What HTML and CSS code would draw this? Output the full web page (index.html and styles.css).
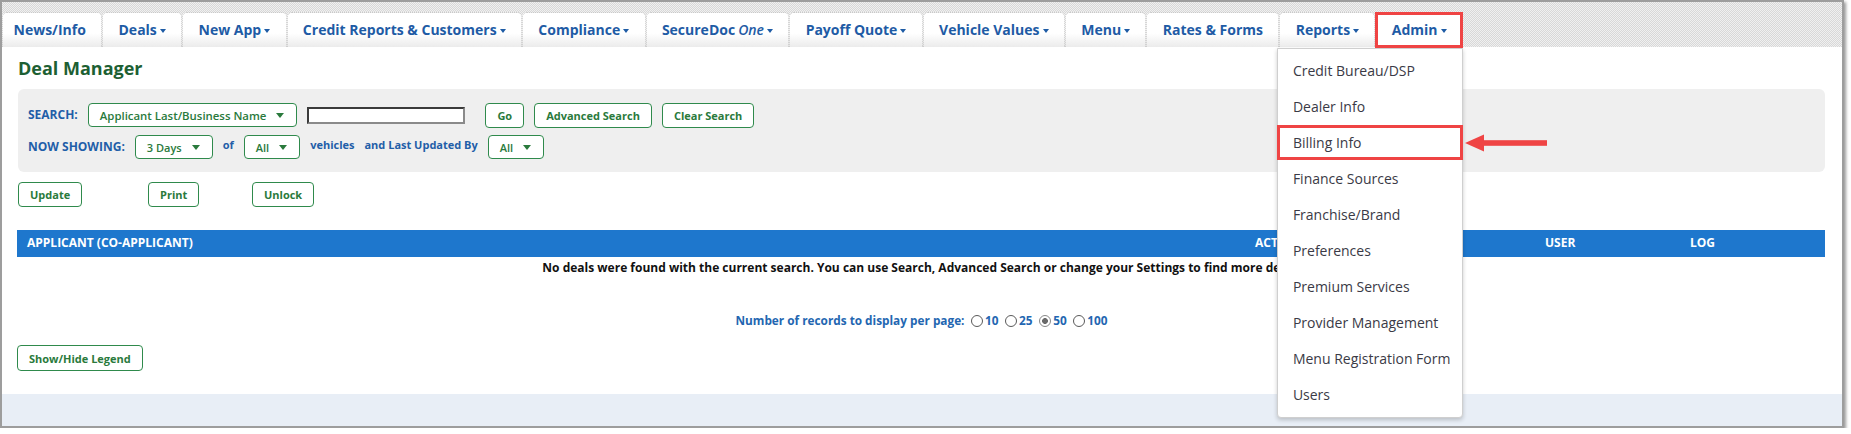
FILE: index.html
```html
<!DOCTYPE html>
<html lang="en">
<head>
    <meta charset="UTF-8">
    <meta name="viewport" content="width=device-width, initial-scale=1.0">
    <title>Deal Manager</title>
    <link rel="stylesheet" href="styles.css">
</head>
<body>
    <div class="screen">
        <nav class="top-nav">
            <ul class="tab-list">
                <li class="tab tab-first">News/Info</li>
                <li class="tab">Deals<span class="caret"></span></li>
                <li class="tab">New App<span class="caret"></span></li>
                <li class="tab">Credit Reports &amp; Customers<span class="caret"></span></li>
                <li class="tab">Compliance<span class="caret"></span></li>
                <li class="tab">SecureDoc<em>One</em><span class="caret"></span></li>
                <li class="tab">Payoff Quote<span class="caret"></span></li>
                <li class="tab">Vehicle Values<span class="caret"></span></li>
                <li class="tab">Menu<span class="caret"></span></li>
                <li class="tab">Rates &amp; Forms</li>
                <li class="tab">Reports<span class="caret"></span></li>
                <li class="tab tab-open">Admin<span class="caret"></span>
                    <ul class="dropdown-menu">
                        <li class="menu-item">Credit Bureau/DSP</li>
                        <li class="menu-item">Dealer Info</li>
                        <li class="menu-item is-marked">Billing Info
                            <svg class="callout-arrow" width="82" height="18" viewBox="0 0 82 18">
                                <polygon points="0,9 19,0.5 19,17.5" fill="#ef4444"/>
                                <rect x="17" y="6.2" width="65" height="5.6" fill="#ef4444"/>
                            </svg>
                        </li>
                        <li class="menu-item">Finance Sources</li>
                        <li class="menu-item">Franchise/Brand</li>
                        <li class="menu-item">Preferences</li>
                        <li class="menu-item">Premium Services</li>
                        <li class="menu-item">Provider Management</li>
                        <li class="menu-item">Menu Registration Form</li>
                        <li class="menu-item">Users</li>
                    </ul>
                </li>
            </ul>
        </nav>

        <main class="page-body">
            <h1 class="page-title">Deal Manager</h1>

            <div class="search-panel">
                <div class="search-row">
                    <span class="field-label">SEARCH:</span>
                    <span class="select-box select-wide">Applicant Last/Business Name<span class="select-arrow"></span></span>
                    <input class="search-input" type="text">
                    <button class="btn btn-go">Go</button>
                    <button class="btn">Advanced Search</button>
                    <button class="btn">Clear Search</button>
                </div>
                <div class="search-row">
                    <span class="field-label">NOW SHOWING:</span>
                    <span class="select-box">3 Days<span class="select-arrow"></span></span>
                    <span class="inline-label">of</span>
                    <span class="select-box">All<span class="select-arrow"></span></span>
                    <span class="inline-label">vehicles</span>
                    <span class="inline-label">and Last Updated By</span>
                    <span class="select-box">All<span class="select-arrow"></span></span>
                </div>
            </div>

            <div class="action-row">
                <div><button class="btn">Update</button></div>
                <div><button class="btn">Print</button></div>
                <div><button class="btn">Unlock</button></div>
            </div>

            <div class="deal-table">
                <div class="table-head">
                    <div class="head-cell">APPLICANT (CO-APPLICANT)</div>
                    <div class="head-cell">ACTIVITY</div>
                    <div class="head-cell">USER</div>
                    <div class="head-cell">LOG</div>
                </div>
                <p class="empty-row">No deals were found with the current search. You can use Search, Advanced Search or change your Settings to find more deals.</p>
            </div>

            <div class="page-size">
                Number of records to display per page:
                <label><input type="radio" name="size">10</label>
                <label><input type="radio" name="size">25</label>
                <label><input type="radio" name="size" checked>50</label>
                <label><input type="radio" name="size">100</label>
            </div>

            <button class="btn btn-legend">Show/Hide Legend</button>
        </main>

        <footer class="page-footer"></footer>
    </div>
</body>
</html>
```

FILE: styles.css
```css
body {
    margin: 0;
    background-color: #fff;
    font-family: 'Open Sans', sans-serif;
}
.screen {
    position: relative;
    width: 1840px;
    height: 424px;
    border: 2px solid #9d9d9d;
    box-shadow: 2px 2px 3px rgba(0, 0, 0, 0.4);
    display: flex;
    flex-direction: column;
    background-color: #fff;
}

/* top tabs */
.top-nav {
    height: 45px;
    flex-shrink: 0;
    box-sizing: border-box;
    padding-top: 10px;
    background: repeating-conic-gradient(#d8d8d8 0 25%, #f0f0f0 0 50%) 0 0 / 2px 2px;
    position: relative;
    z-index: 5;
}
.tab-list {
    list-style: none;
    margin: 0;
    padding: 0;
    display: flex;
    height: 35px;
}
.tab {
    position: relative;
    box-sizing: border-box;
    height: 35px;
    padding: 0 15.35px;
    display: flex;
    align-items: center;
    gap: 3px;
    border: 1px dotted #c9c9c9;
    border-bottom: none;
    border-radius: 5px 5px 0 0;
    background: linear-gradient(to bottom, #fff 0%, #fff 60%, #ebebeb 100%);
    color: #1e5ba5;
    font-weight: 700;
    font-size: 14px;
    line-height: 34px;
    white-space: nowrap;
}
.tab-first {
    padding-left: 10.5px;
}
.tab em {
    font-weight: 600;
}
.caret {
    display: inline-block;
    width: 0;
    height: 0;
    border-left: 3.5px solid transparent;
    border-right: 3.5px solid transparent;
    border-top: 4px solid currentColor;
    margin-top: 2px;
}
.tab-open {
    background: #fff;
}
.tab-open::after {
    content: "";
    position: absolute;
    top: -1px;
    left: -1px;
    right: -1px;
    bottom: -1px;
    border: 3px solid #ef4444;
}

/* admin dropdown */
.dropdown-menu {
    position: absolute;
    top: calc(100% + 1px);
    right: -1px;
    width: 186px;
    box-sizing: border-box;
    margin: 0;
    padding: 4px 0;
    list-style: none;
    background-color: #fff;
    border: 1px solid #cfcfcf;
    border-radius: 0 0 4px 4px;
    box-shadow: 0 2px 4px rgba(0, 0, 0, 0.2);
}
.menu-item {
    position: relative;
    height: 36px;
    padding-left: 15px;
    color: #3a3a46;
    font-weight: 400;
    font-size: 14px;
    line-height: 36px;
}
.menu-item.is-marked::after {
    content: "";
    position: absolute;
    top: 0;
    bottom: 1px;
    left: -1px;
    right: -1px;
    border: 3px solid #ef4444;
}
.callout-arrow {
    position: absolute;
    left: calc(100% + 3px);
    top: 50%;
    transform: translateY(-50%);
}

/* page body */
.page-body {
    flex: 1;
    padding: 9px 17px 0 16px;
}
.page-title {
    margin: 0;
    color: #1d5f33;
    font-size: 18px;
    font-weight: 700;
    line-height: 24px;
}
.search-panel {
    margin-top: 9px;
    background-color: #efefef;
    border-radius: 6px;
    padding: 13px 10px 13px 10px;
    display: flex;
    flex-direction: column;
    gap: 7px;
}
.search-row {
    display: flex;
    align-items: center;
    gap: 10px;
    min-height: 24px;
}
.search-row:first-child {
    min-height: 26px;
}
.field-label {
    color: #1f5ea8;
    font-size: 12px;
    font-weight: 700;
    line-height: 16px;
}
.inline-label {
    color: #1f5ea8;
    font-size: 11px;
    font-weight: 700;
    line-height: 16px;
    margin-top: -4px;
}
.select-box {
    display: inline-flex;
    align-items: center;
    gap: 10px;
    box-sizing: border-box;
    height: 24px;
    padding: 1px 12px 0 11px;
    background-color: #fff;
    border: 1px solid #2f8a4c;
    border-radius: 4px;
    color: #2a7a3c;
    font-size: 11px;
    font-weight: 600;
}
.select-wide {
    font-size: 11.4px;
}
.select-arrow {
    display: inline-block;
    width: 0;
    height: 0;
    border-left: 4px solid transparent;
    border-right: 4px solid transparent;
    border-top: 5px solid #2a7a3c;
}
.search-input {
    box-sizing: border-box;
    width: 158px;
    height: 17px;
    margin: 0;
    border: 2px solid #3a3a3a;
    border-right-color: #8a8a8a;
    border-bottom-color: #8a8a8a;
    background-color: #fff;
}
.btn {
    box-sizing: border-box;
    height: 25px;
    padding: 0 11px;
    background-color: #fff;
    border: 1px solid #2f8a4c;
    border-radius: 4px;
    color: #2a7a3c;
    font-family: 'Open Sans', sans-serif;
    font-size: 11px;
    font-weight: 700;
    cursor: pointer;
}
.btn-go {
    margin-left: 10px;
}
.action-row {
    margin-top: 10px;
    display: grid;
    grid-template-columns: 130px 104px auto;
}

/* deals table */
.deal-table {
    margin-top: 23px;
}
.table-head {
    display: grid;
    grid-template-columns: 1228px 290px 145px 1fr;
    background-color: #1e77cd;
    margin-left: -1px;
}
.head-cell {
    padding: 5px 10px 6px;
    color: #fff;
    font-size: 12px;
    font-weight: 700;
    line-height: 16px;
}
.empty-row {
    margin: 0;
    padding-top: 3px;
    text-align: center;
    color: #111;
    font-size: 12px;
    font-weight: 700;
    line-height: 16px;
}
.page-size {
    margin-top: 36px;
    text-align: center;
    color: #2366b1;
    font-size: 11.8px;
    font-weight: 700;
    line-height: 16px;
}
.page-size input {
    appearance: none;
    box-sizing: border-box;
    width: 12.5px;
    height: 12.5px;
    margin: 0 2px 0 3px;
    vertical-align: -2px;
    border: 1px solid #5a5a5a;
    border-radius: 50%;
    background-color: #fff;
}
.page-size input:checked {
    border-color: #888;
    background: radial-gradient(circle, #6a6a6a 0 2.6px, #fff 3.2px);
}
.btn-legend {
    margin-top: 17px;
    margin-left: -1px;
    height: 26px;
}
.page-footer {
    height: 32px;
    flex-shrink: 0;
    background-color: #e8eef6;
}
```
